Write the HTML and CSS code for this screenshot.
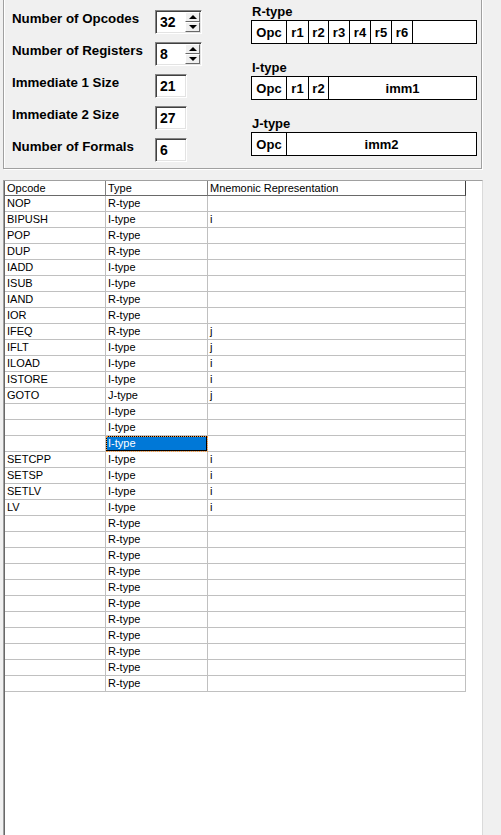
FILE: index.html
```html
<!DOCTYPE html>
<html>
<head>
<meta charset="utf-8">
<link rel="stylesheet" href="styles.css">
</head>
<body>
<div class="group">
  <div class="params">
    <div class="field"><span class="label">Number of Opcodes</span><span class="box spin"><span class="val">32</span><span class="arrows"><span class="btn up"></span><span class="btn down"></span></span></span></div>
    <div class="field"><span class="label">Number of Registers</span><span class="box spin"><span class="val">8</span><span class="arrows"><span class="btn up"></span><span class="btn down"></span></span></span></div>
    <div class="field"><span class="label">Immediate 1 Size</span><span class="box"><span class="val">21</span></span></div>
    <div class="field"><span class="label">Immediate 2 Size</span><span class="box"><span class="val">27</span></span></div>
    <div class="field"><span class="label">Number of Formals</span><span class="box"><span class="val">6</span></span></div>
  </div>
  <div class="formats">
    <div class="fmt-title">R-type</div>
    <div class="fmt-box">
      <span class="c w35">Opc</span><span class="c w22">r1</span><span class="c w20">r2</span><span class="c w21">r3</span><span class="c w21">r4</span><span class="c w21">r5</span><span class="c w21">r6</span><span class="c rest"></span>
    </div>
    <div class="fmt-title">I-type</div>
    <div class="fmt-box">
      <span class="c w35">Opc</span><span class="c w22">r1</span><span class="c w20">r2</span><span class="c rest">imm1</span>
    </div>
    <div class="fmt-title">J-type</div>
    <div class="fmt-box">
      <span class="c w35">Opc</span><span class="c rest">imm2</span>
    </div>
  </div>
</div>

<div class="list">
  <div class="row head"><span class="cell">Opcode</span><span class="cell">Type</span><span class="cell">Mnemonic Representation</span></div>
  <div class="row"><span class="cell">NOP</span><span class="cell">R-type</span><span class="cell"></span></div>
  <div class="row"><span class="cell">BIPUSH</span><span class="cell">I-type</span><span class="cell">i</span></div>
  <div class="row"><span class="cell">POP</span><span class="cell">R-type</span><span class="cell"></span></div>
  <div class="row"><span class="cell">DUP</span><span class="cell">R-type</span><span class="cell"></span></div>
  <div class="row"><span class="cell">IADD</span><span class="cell">I-type</span><span class="cell"></span></div>
  <div class="row"><span class="cell">ISUB</span><span class="cell">I-type</span><span class="cell"></span></div>
  <div class="row"><span class="cell">IAND</span><span class="cell">R-type</span><span class="cell"></span></div>
  <div class="row"><span class="cell">IOR</span><span class="cell">R-type</span><span class="cell"></span></div>
  <div class="row"><span class="cell">IFEQ</span><span class="cell">R-type</span><span class="cell">j</span></div>
  <div class="row"><span class="cell">IFLT</span><span class="cell">I-type</span><span class="cell">j</span></div>
  <div class="row"><span class="cell">ILOAD</span><span class="cell">I-type</span><span class="cell">i</span></div>
  <div class="row"><span class="cell">ISTORE</span><span class="cell">I-type</span><span class="cell">i</span></div>
  <div class="row"><span class="cell">GOTO</span><span class="cell">J-type</span><span class="cell">j</span></div>
  <div class="row"><span class="cell"></span><span class="cell">I-type</span><span class="cell"></span></div>
  <div class="row"><span class="cell"></span><span class="cell">I-type</span><span class="cell"></span></div>
  <div class="row"><span class="cell"></span><span class="cell sel">I-type</span><span class="cell"></span></div>
  <div class="row"><span class="cell">SETCPP</span><span class="cell">I-type</span><span class="cell">i</span></div>
  <div class="row"><span class="cell">SETSP</span><span class="cell">I-type</span><span class="cell">i</span></div>
  <div class="row"><span class="cell">SETLV</span><span class="cell">I-type</span><span class="cell">i</span></div>
  <div class="row"><span class="cell">LV</span><span class="cell">I-type</span><span class="cell">i</span></div>
  <div class="row"><span class="cell"></span><span class="cell">R-type</span><span class="cell"></span></div>
  <div class="row"><span class="cell"></span><span class="cell">R-type</span><span class="cell"></span></div>
  <div class="row"><span class="cell"></span><span class="cell">R-type</span><span class="cell"></span></div>
  <div class="row"><span class="cell"></span><span class="cell">R-type</span><span class="cell"></span></div>
  <div class="row"><span class="cell"></span><span class="cell">R-type</span><span class="cell"></span></div>
  <div class="row"><span class="cell"></span><span class="cell">R-type</span><span class="cell"></span></div>
  <div class="row"><span class="cell"></span><span class="cell">R-type</span><span class="cell"></span></div>
  <div class="row"><span class="cell"></span><span class="cell">R-type</span><span class="cell"></span></div>
  <div class="row"><span class="cell"></span><span class="cell">R-type</span><span class="cell"></span></div>
  <div class="row"><span class="cell"></span><span class="cell">R-type</span><span class="cell"></span></div>
  <div class="row"><span class="cell"></span><span class="cell">R-type</span><span class="cell"></span></div>
</div>
</body>
</html>
```

FILE: styles.css
```css
* { box-sizing: border-box; }
html, body { margin: 0; padding: 0; }
body {
  background: #f0f0f0;
  width: 501px;
  height: 835px;
  overflow: hidden;
  font-family: "Liberation Sans", Arial, sans-serif;
  color: #000;
}

/* group box (its top edge lies above the visible frame) */
.group {
  margin: -12px 0 0 3px;
  width: 479px;
  height: 181px;
  border: 1px solid #a0a0a0;
  box-shadow: 1px 1px 0 #fff, inset 1px 1px 0 #fff;
  display: flex;
}

.params {
  width: 247px;
  padding: 21px 0 0 8px;
  display: flex;
  flex-direction: column;
  gap: 8px;
}
.field {
  display: flex;
  height: 24px;
}
.label {
  width: 143px;
  padding-top: 1px;
  font-weight: bold;
  font-size: 13.3px;
  line-height: 16px;
  white-space: nowrap;
}
.box {
  width: 32px;
  height: 24px;
  background: #fff;
  border: 1px solid;
  border-color: #848484 #fff #fff #848484;
  box-shadow: inset 1px 1px 0 #404040, inset -1px -1px 0 #e3e3e3;
  display: flex;
  align-items: center;
  padding-left: 4px;
}
.box.spin { width: 47px; }
.val {
  font-weight: bold;
  font-size: 14px;
  line-height: 16px;
}
.arrows {
  margin-left: auto;
  margin-right: 1px;
  width: 15px;
  height: 20px;
  display: flex;
  flex-direction: column;
}
.btn {
  flex: 1;
  background: #f0f0f0;
  border: 1px solid;
  border-color: #fff #696969 #696969 #fff;
  display: flex;
  align-items: center;
  justify-content: center;
}
.btn::after {
  content: "";
  width: 0;
  height: 0;
  border-left: 4px solid transparent;
  border-right: 4px solid transparent;
}
.btn.up::after { border-bottom: 4px solid #000; }
.btn.down::after { border-top: 4px solid #000; }

/* formats */
.formats {
  width: 226px;
  padding-top: 15px;
}
.fmt-title {
  font-weight: bold;
  font-size: 13px;
  line-height: 16px;
  padding-left: 1px;
}
.fmt-box {
  height: 24px;
  border: 1px solid #000;
  background: #fff;
  display: flex;
  margin-bottom: 16px;
}
.c {
  border-right: 1px solid #000;
  display: flex;
  align-items: center;
  justify-content: center;
  font-weight: bold;
  font-size: 13px;
}
.w35 { width: 35px; }
.w22 { width: 22px; }
.w21 { width: 21px; }
.w20 { width: 20px; }
.c.rest { flex: 1; border-right: none; }

/* list view */
.list {
  margin: 11px 0 0 3px;
  width: 480px;
  height: 700px;
  background: #fff;
  border-top: 1px solid #a0a0a0;
  border-left: 1px solid #a0a0a0;
  border-right: 1px solid #dadada;
  padding-left: 1px;
  box-shadow: inset 1px 0 0 #696969;
}
.row {
  display: grid;
  grid-template-columns: 101px 102px 258px;
  width: 461px;
}
.cell {
  height: 16px;
  border-right: 1px solid #c0c0c0;
  border-bottom: 1px solid #c0c0c0;
  padding-left: 2px;
  font-size: 11px;
  line-height: 15px;
  white-space: nowrap;
  overflow: hidden;
}
.row.head .cell {
  height: 15px;
  line-height: 14px;
  border-right-color: #808080;
  border-bottom-color: #696969;
}
.row.head .cell:last-child { border-right-color: #404040; }
.cell.sel {
  background: #0078d7;
  color: #fff;
  box-shadow: inset 0 0 0 1px #000;
  outline: 1px dotted #ff9a3c;
  outline-offset: -1px;
}
```
